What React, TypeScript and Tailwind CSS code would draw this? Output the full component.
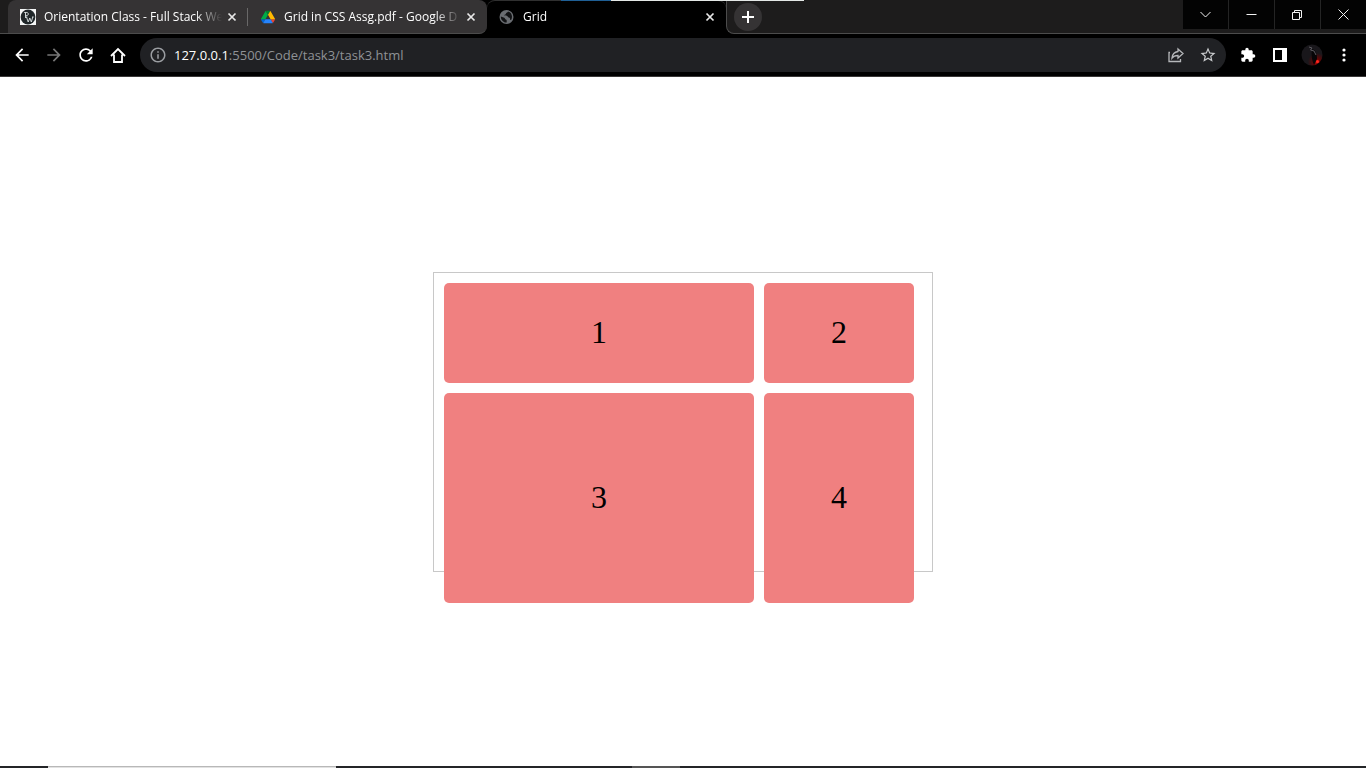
import type { ReactNode } from "react";
import { MdArrowBack, MdArrowForward, MdExtension, MdOutlineInfo, MdRefresh, MdStarOutline } from "react-icons/md";

function PwIcon() {
  return (
    <svg viewBox="0 0 16 16" className="size-4 shrink-0" aria-hidden="true">
      <rect width="16" height="16" fill="#f4f6f6" />
      <circle cx="8" cy="8" r="7.4" fill="#20272a" />
      <path d="M5.500 9V3.500M4.200 3.500h2.600c2 0 2 3 0 3H5.500" fill="none" stroke="#dfe5e6" strokeWidth="0.900" />
      <path d="M6.500 8l1.700 5L9.800 9l1.500 4 1.500-5M5.800 8h1.500M12 8h1.700" fill="none" stroke="#dfe5e6" strokeWidth="0.900" />
    </svg>
  );
}

function DriveIcon() {
  return (
    <svg viewBox="0 0 87.3 78" className="size-4 shrink-0 p-px" aria-hidden="true">
      <path d="m6.600 66.850 3.850 6.650c.8 1.400 1.950 2.500 3.300 3.300l13.750-23.800h-27.500c0 1.550.4 3.100 1.200 4.500z" fill="#0066da" />
      <path d="m43.650 25-13.750-23.800c-1.350.8-2.500 1.900-3.300 3.300l-25.400 44a9.060 9.060 0 0 0 -1.200 4.500h27.500z" fill="#00ac47" />
      <path d="m73.550 76.800c1.350-.8 2.500-1.900 3.300-3.300l1.600-2.750 7.650-13.250c.8-1.400 1.200-2.950 1.200-4.500h-27.502l5.852 11.500z" fill="#ea4335" />
      <path d="m43.650 25 13.750-23.800c-1.350-.8-2.900-1.200-4.500-1.200h-18.500c-1.600 0-3.150.45-4.500 1.200z" fill="#00832d" />
      <path d="m59.800 53h-32.300l-13.750 23.800c1.350.8 2.900 1.200 4.500 1.200h50.800c1.600 0 3.150-.45 4.500-1.200z" fill="#2684fc" />
      <path d="m73.400 26.500-12.700-22c-.8-1.400-1.950-2.500-3.300-3.300l-13.750 23.800 16.150 28h27.450c0-1.550-.4-3.100-1.200-4.500z" fill="#ffba00" />
    </svg>
  );
}

function GlobeIcon() {
  return (
    <svg viewBox="0 0 16 16" className="size-4 shrink-0" aria-hidden="true">
      <circle cx="7.500" cy="8" r="7" fill="#6a6d72" />
      <path
        d="M1.800 7.500l3.500 1.200c1 .3.400 1.600 1.600 1.700 1 .1.800 1 .8 3.200C4.500 13.700 1.800 11 1.800 7.500zM9 2.500c-.2 1.300-1.900.9-2 2.100-.1 1.300-1.600.7-1.500 1.600.1.800 1.800.3 2.700.8.900.4.600 1.500 1.600 1.600 1 .1 1.300.8 1.300 1.600 0 .7.500 1 1 .9 1.700-2.700 1.200-7.400-3.100-8.600z"
        fill="#111214"
      />
    </svg>
  );
}

function CloseIcon() {
  return (
    <svg viewBox="0 0 16 16" className="size-4" aria-hidden="true">
      <path d="M4.500 4.500l7 7m0-7l-7 7" stroke="#e8e8e8" strokeWidth="1.700" />
    </svg>
  );
}

type TabProps = { title: string; icon: ReactNode; className: string };

function Tab({ title, icon, className }: TabProps) {
  return (
    <div className={`flex items-center gap-[2px] pr-2 pl-3 ${className}`}>
      <button type="button" className="flex min-w-0 flex-1 items-center gap-2">
        {icon}
        <span className="flex-1 overflow-hidden text-left text-xs whitespace-nowrap [mask-image:linear-gradient(to_right,#000_85%,transparent)]">
          {title}
        </span>
      </button>
      <button type="button" aria-label={`Close ${title}`}>
        <CloseIcon />
      </button>
    </div>
  );
}

function WindowButton({ label, children }: { label: string; children: ReactNode }) {
  return (
    <button type="button" aria-label={label} className="flex h-full w-[45px] items-center justify-center bg-[#030303]">
      <svg viewBox="0 0 11 11" className="size-[11px]" fill="none" stroke="#f2f2f2" strokeWidth="1">
        {children}
      </svg>
    </button>
  );
}

function ToolButton({ label, children }: { label: string; children: ReactNode }) {
  return (
    <button type="button" aria-label={label} className="flex size-8 shrink-0 items-center justify-center">
      {children}
    </button>
  );
}

function TabStrip() {
  return (
    <div className="relative flex h-[34px] items-stretch bg-[#1d1c1c]">
      <div className="w-2 border-b border-[#4c4c4c]" />
      <div className="flex w-60 items-stretch rounded-tl-lg border-b border-[#4c4c4c] bg-[#353334]">
        <Tab title="Orientation Class - Full Stack We" icon={<PwIcon />} className="min-w-0 flex-1" />
      </div>
      <div className="flex w-[239px] bg-black">
        <Tab
          title="Grid in CSS Assg.pdf - Google D"
          icon={<DriveIcon />}
          className="min-w-0 flex-1 rounded-r-lg border-b border-[#4c4c4c] bg-[#353334]"
        />
      </div>
      <div className="flex w-[239px] bg-black">
        <Tab title="Grid" icon={<GlobeIcon />} className="min-w-0 flex-1 rounded-t-lg border-y border-t-[#303030] border-b-black" />
      </div>
      <div className="flex flex-1 bg-black">
        <div className="flex flex-1 justify-between rounded-bl-lg border-b border-l border-[#4c4c4c] bg-[#1d1c1c]">
          <button
            type="button"
            aria-label="New tab"
            className="mt-[3px] ml-[7px] flex size-7 items-center justify-center rounded-full bg-[#353334]"
          >
            <svg viewBox="0 0 12 12" className="size-3" stroke="#fff" strokeWidth="2">
              <path d="M6 0v12M0 6h12" />
            </svg>
          </button>
          <div className="flex h-[29px] gap-px bg-[#242424]">
            <WindowButton label="Search tabs">
              <path d="M0.500 3l5 5 5-5" />
            </WindowButton>
            <WindowButton label="Minimize">
              <path d="M0.500 5.500h10" />
            </WindowButton>
            <WindowButton label="Restore">
              <path d="M0.500 3.500h7v7h-7zM2.500 3.500v-2h7v7h-2" />
            </WindowButton>
            <WindowButton label="Close window">
              <path d="M0.500 0.500l10 10M10.500 0.500l-10 10" />
            </WindowButton>
          </div>
        </div>
      </div>
      <div className="absolute top-2 left-[247px] h-[18px] w-px bg-[#696868]" />
      <div className="absolute top-0 left-[561px] flex h-px">
        <div className="w-[50px] bg-[#1f5f95]" />
        <div className="w-[193px] bg-[#e4e8e6]" />
      </div>
    </div>
  );
}

function Toolbar() {
  return (
    <div className="flex h-[43px] items-center border-b border-[#3a3838] bg-black px-[6px] text-white">
      <ToolButton label="Back">
        <MdArrowBack className="size-5" />
      </ToolButton>
      <ToolButton label="Forward">
        <MdArrowForward className="size-5 text-[#777]" />
      </ToolButton>
      <ToolButton label="Reload">
        <MdRefresh className="size-5" />
      </ToolButton>
      <ToolButton label="Home">
        <svg viewBox="0 0 16 16" className="size-4" fill="none" stroke="currentColor" strokeWidth="1.800">
          <path d="M1 9L8 2l7 7M4 7.500V15h8V7.500" />
        </svg>
      </ToolButton>
      <div className="mx-[6px] flex h-[34px] flex-1 items-center rounded-full bg-[#202124] pr-[2px] pl-[9px]">
        <MdOutlineInfo className="mr-[7px] size-[18px] shrink-0 text-[#9a9da1]" />
        <a href="#page" className="flex-1 text-[13px] leading-[22px] text-[#8f9296]">
          <span className="text-white">127.0.0.1</span>:5500/Code/task3/task3.html
        </a>
        <ToolButton label="Share">
          <svg viewBox="0 0 16 16" className="size-4" fill="none" stroke="#b5b7ba" strokeWidth="1.300">
            <path d="M2 5.500H1v9h11.500V12" />
            <path d="M10 2l5 4.500-5 4.500V8.500C7.500 8.500 5.500 9 4 11c.3-3.500 2.500-6 6-6.500z" />
          </svg>
        </ToolButton>
        <ToolButton label="Bookmark">
          <MdStarOutline className="size-[18px] text-[#c8cacc]" />
        </ToolButton>
      </div>
      <ToolButton label="Extensions">
        <MdExtension className="size-4" />
      </ToolButton>
      <ToolButton label="Side panel">
        <svg viewBox="0 0 14 14" className="size-[14px]">
          <path d="M0 0h14v14H0zM2 2v10h7V2z" fill="#fff" fillRule="evenodd" />
        </svg>
      </ToolButton>
      <ToolButton label="Profile">
        <svg viewBox="0 0 22 22" className="size-[22px]">
          <defs>
            <radialGradient id="glow" cx="16" cy="18" r="9" gradientUnits="userSpaceOnUse">
              <stop offset="0" stopColor="#d00808" />
              <stop offset="0.350" stopColor="#650606" />
              <stop offset="1" stopColor="#19171b" />
            </radialGradient>
          </defs>
          <circle cx="11" cy="11" r="10.500" fill="url(#glow)" />
          <path d="M11 5c4 1 5 6 5 10l-3 6c-2-4-3-10-2-16z" fill="#070507" />
          <path d="M8 3l3 1-1.500 2 3.500 1 2 4" fill="none" stroke="#5c5a60" strokeWidth="1" />
          <circle cx="16.500" cy="17.500" r="1.500" fill="#ff281e" />
        </svg>
      </ToolButton>
      <ToolButton label="Menu">
        <svg viewBox="0 0 4 14" className="h-[14px] w-1" fill="#fff">
          <circle cx="2" cy="2" r="1.600" />
          <circle cx="2" cy="7" r="1.600" />
          <circle cx="2" cy="12" r="1.600" />
        </svg>
      </ToolButton>
    </div>
  );
}

function GridItem({ children }: { children: ReactNode }) {
  return <div className="flex items-center justify-center rounded-[5px] bg-[#f08080] pb-[2px]">{children}</div>;
}

export default function App() {
  return (
    <div className="flex min-h-screen flex-col bg-white">
      <header className="font-['Open_Sans','Noto_Sans',sans-serif] text-white">
        <TabStrip />
        <Toolbar />
      </header>
      <main id="page" className="flex flex-1 items-center justify-center pt-px">
        <div className="grid h-[300px] w-[500px] grid-cols-[310px_150px] grid-rows-[100px_210px] gap-[10px] border border-[#c8c8c8] p-[10px] font-['Liberation_Serif',serif] text-[32px] text-black">
          <GridItem>1</GridItem>
          <GridItem>2</GridItem>
          <GridItem>3</GridItem>
          <GridItem>4</GridItem>
        </div>
      </main>
      <footer className="flex h-[2px] bg-[#242528]">
        <div className="ml-12 w-72 border-t border-[#b8b8b8] bg-[#e2e2e2]" />
        <div className="ml-[296px] w-12 bg-[#555]" />
      </footer>
    </div>
  );
}
